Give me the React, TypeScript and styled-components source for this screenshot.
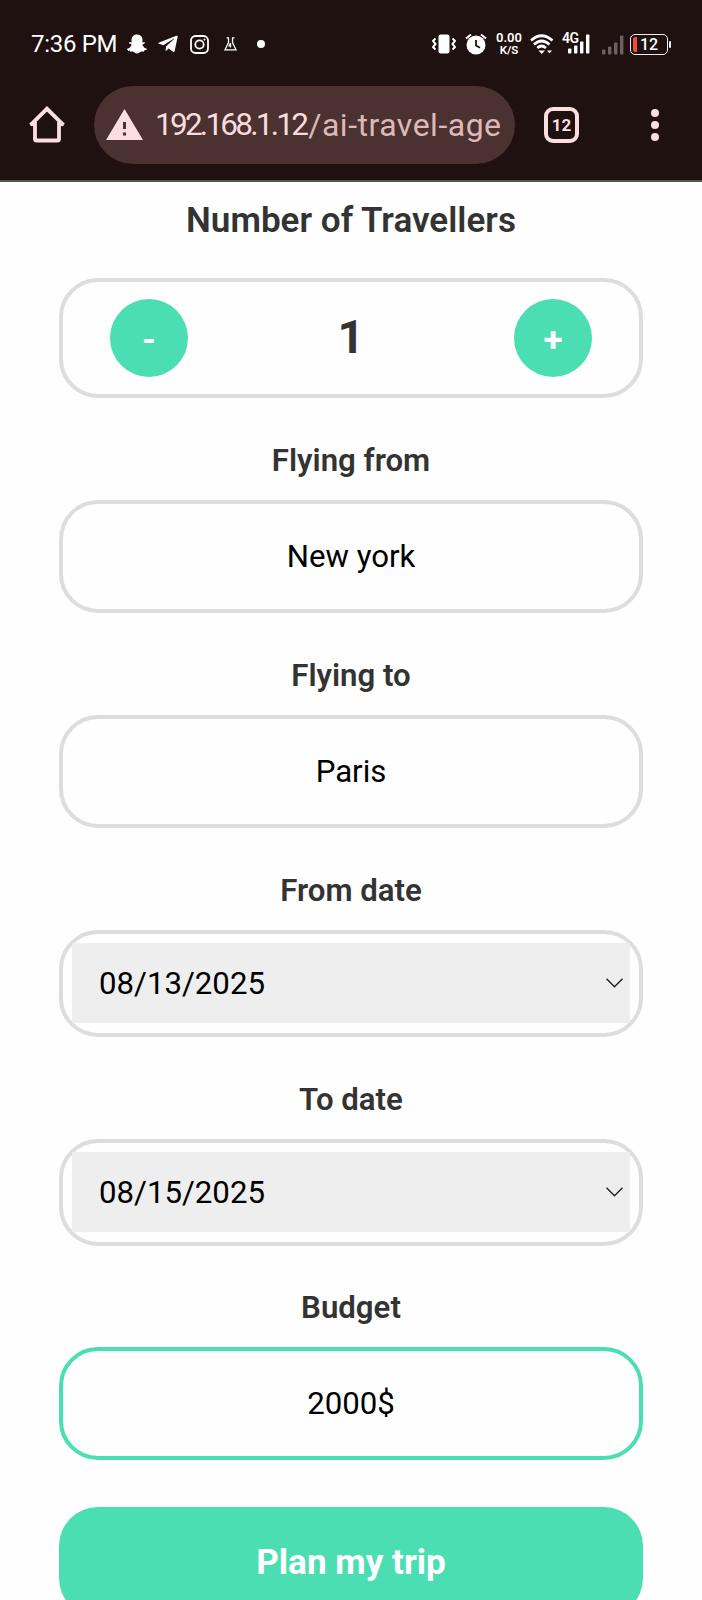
import React from "react";
import styled, { createGlobalStyle } from "styled-components";
import { FaSnapchatGhost, FaTelegramPlane } from "react-icons/fa";

const GREEN = "#4cdeb3";

const GlobalStyle = createGlobalStyle`
  * { box-sizing: border-box; }
  body { margin: 0; background: #fff; font-family: Roboto, "Liberation Sans", sans-serif; }
`;

const Screen = styled.div`
  width: 702px;
  height: 1600px;
  overflow: hidden;
  background: #fefefe;
`;

const BrowserChrome = styled.header`
  height: 182px;
  background: #1e1110;
  border-bottom: 2px solid #5b5050;
`;

const StatusBar = styled.div`
  display: flex;
  align-items: center;
  height: 86px;
  padding: 2px 34px 0 31px;
  color: #fff;
  svg { display: block; flex: none; }
`;

const Clock = styled.span`
  width: 96px;
  font-size: 24px;
  line-height: 28px;
  letter-spacing: -0.3px;
  white-space: nowrap;
`;

const IconSlot = styled.span<{ $w: number; $left?: number }>`
  display: flex;
  flex: none;
  justify-content: center;
  width: ${(p) => p.$w}px;
  margin-left: ${(p) => p.$left ?? 0}px;
`;

const Spacer = styled.div`
  flex: 1;
`;

const NetSpeed = styled.div`
  display: flex;
  flex-direction: column;
  align-items: center;
  width: 26px;
  margin-left: 9px;
  font-size: 13px;
  line-height: 12.5px;
  font-weight: 600;
  white-space: nowrap;
  small { font-size: 11.5px; }
`;

const AddressRow = styled.div`
  display: flex;
  align-items: center;
  height: 78px;
  padding: 0 40px 0 29px;
  svg { display: block; flex: none; }
`;

const AddressPill = styled.div`
  display: flex;
  align-items: center;
  width: 421px;
  height: 78px;
  margin-left: 29px;
  padding-left: 12px;
  border-radius: 39px;
  background: #4b3130;
`;

const Host = styled.span`
  margin-left: 12px;
  font-size: 31.5px;
  font-weight: 400;
  line-height: 40px;
  letter-spacing: -2.75px;
  white-space: nowrap;
  color: #fadcdc;
`;

const Path = styled.span`
  margin-left: 2px;
  font-size: 32px;
  font-weight: 400;
  line-height: 40px;
  letter-spacing: 0.5px;
  white-space: nowrap;
  color: #dcb9b9;
`;

const TabCount = styled.div`
  display: flex;
  align-items: center;
  justify-content: center;
  width: 35px;
  height: 36px;
  margin-left: 29px;
  border: 4px solid #fbdede;
  border-radius: 9px;
  color: #fbdede;
  font-size: 17px;
  font-weight: 700;
`;

const Dots = styled.div`
  display: flex;
  flex-direction: column;
  gap: 4px;
  margin-left: auto;
  margin-right: 3px;
  span { width: 8px; height: 8px; border-radius: 50%; background: #fbdede; }
`;

const Form = styled.main`
  display: flex;
  flex-direction: column;
  padding: 0 59px;
`;

const Title = styled.h2`
  margin: 17px 0 37px;
  font-size: 35.1px;
  font-weight: 600;
  line-height: 42px;
  text-align: center;
  color: #333;
`;

const Counter = styled.div`
  display: flex;
  align-items: flex-start;
  justify-content: space-between;
  height: 120px;
  padding: 17px 47px 0;
  border: 4px solid #ddd;
  border-radius: 39px;
`;

const RoundButton = styled.button`
  display: flex;
  align-items: center;
  justify-content: center;
  width: 78px;
  height: 78px;
  padding: 4px 0 0;
  border: 0;
  border-radius: 50%;
  background: ${GREEN};
  color: #fff;
  font: 700 35.1px/40px Roboto, sans-serif;
`;

const Count = styled.span`
  font-size: 46.8px;
  font-weight: 700;
  line-height: 77px;
  color: #333;
`;

const Field = styled.section<{ $top: number }>`
  display: flex;
  flex-direction: column;
  padding-top: ${(p) => p.$top}px;
`;

const Label = styled.label`
  height: 59px;
  font-size: 31.2px;
  font-weight: 600;
  line-height: 40px;
  text-align: center;
  color: #333;
`;

const TextInput = styled.input<{ $active?: boolean }>`
  width: 100%;
  height: 113px;
  padding: 0;
  border: 4px solid ${(p) => (p.$active ? GREEN : "#ddd")};
  border-radius: 39px;
  outline: none;
  background: transparent;
  color: #000;
  font: 400 31.2px Roboto, sans-serif;
  text-align: center;
`;

const DateBox = styled.div`
  display: flex;
  height: 107px;
  padding: 9px 9px 10px;
  border: 4px solid #ddd;
  border-radius: 39px;
`;

const DateValue = styled.div`
  display: flex;
  flex: 1;
  align-items: center;
  justify-content: space-between;
  padding: 0 7px 0 27px;
  background: #eee;
  color: #000;
  font-size: 31.2px;
`;

const Submit = styled.button`
  height: 110px;
  margin-top: 47px;
  padding: 1px 0 0;
  border: 0;
  border-radius: 39px;
  background: ${GREEN};
  color: #fff;
  font: 700 35.1px/41px Roboto, sans-serif;
`;

const Instagram = () => (
  <svg width="19" height="19" viewBox="0 0 19 19" fill="none" stroke="#fff" strokeWidth="1.8">
    <rect x="1" y="1" width="17" height="17" rx="4.5" />
    <circle cx="9.5" cy="9.5" r="4.2" />
    <circle cx="14.5" cy="4.6" r="0.6" fill="#fff" strokeWidth="1" />
  </svg>
);

const Flask = () => (
  <svg width="13" height="14" viewBox="0 0 13 14" fill="none" stroke="#fff" strokeWidth="1.3">
    <path d="M2.5 .8h2.5M8 .8h2.5M4.5 1v4.500L1 12.800h11L8.500 5.500V1M6.500 6L4.800 9.500M6.500 6.500v4" />
  </svg>
);

const Vibrate = () => (
  <svg width="24" height="20" viewBox="0 0 24 20" fill="none" stroke="#fff" strokeWidth="2">
    <rect x="6.5" y="0.5" width="11" height="19" rx="2" fill="#fff" stroke="none" />
    <path d="M3.500 4.500L1 7L3.500 10L1 13L3.500 15.500M20.500 4.500L23 7L20.500 10L23 13L20.500 15.500" />
  </svg>
);

const Alarm = () => (
  <svg width="22" height="22" viewBox="0 0 22 22" fill="none">
    <circle cx="11" cy="12" r="9.5" fill="#fff" />
    <path d="M1 5.500L6 1.500M21 5.500L16 1.500" stroke="#fff" strokeWidth="2" />
    <path d="M11 7v5.500l4 2.300" stroke="#1e1110" strokeWidth="1.8" />
  </svg>
);

const Wifi = () => (
  <svg width="24" height="20" viewBox="0 0 24 20" fill="none" stroke="#fff" strokeWidth="2.7">
    <path d="M1 6.500Q11.500-3 22.500 6.500M4 10.500Q11.500 3.500 19.500 10.500M7.300 14Q11.500 10 16 14" />
    <path d="M8.500 16.500h6.500l-3.200 3.500zM17 16.500h5l-2.500 3z" fill="#fff" stroke="none" />
  </svg>
);

const NetworkLabel = styled.div`
  display: flex;
  align-items: flex-start;
  width: 28px;
  height: 22px;
  margin-left: 8px;
  span { width: 6px; font-size: 14px; line-height: 10px; font-weight: 600; letter-spacing: -0.5px; }
`;

const Bars = ({ color, heights }: { color: string; heights: number[] }) => (
  <svg width="22" height="21" viewBox="0 0 22 21" fill={color}>
    {heights.map((h, i) => (
      <rect key={i} x={i * 6} y={20.5 - h} width="3.4" height={h} rx="0.8" />
    ))}
  </svg>
);

const Battery = styled.div`
  position: relative;
  display: flex;
  align-items: center;
  justify-content: center;
  width: 38px;
  height: 21px;
  margin-left: 6px;
  border: 1.5px solid #eee;
  border-radius: 5px;
  font-size: 16px;
  font-weight: 500;
  &::before { content: ""; position: absolute; left: 2px; top: 2px; width: 4px; height: 15px; border-radius: 2px 0 0 2px; background: #ef4b3e; }
  &::after { content: ""; position: absolute; right: -4px; top: 6px; width: 2px; height: 7px; border-radius: 1px; background: #eee; }
`;

const Home = () => (
  <svg width="36" height="39" viewBox="0 0 36 39" fill="none" stroke="#fbdede" strokeWidth="3.8">
    <path d="M1.500 19.200L18 2.800L34.500 19.200M1.500 18h4.500v15q0 1.500 1.500 1.500h21q1.500 0 1.500-1.500V18h4.500" />
  </svg>
);

const Warning = () => (
  <svg width="37" height="33" viewBox="0 0 37 33">
    <path d="M18.500 0L37 31H0z" fill="#fbdede" />
    <path d="M17 13h3v7h-3zM17 23.500h3v3h-3z" fill="#4b3130" />
  </svg>
);

const Chevron = () => (
  <svg width="17" height="10" viewBox="0 0 17 10" fill="none" stroke="#222" strokeWidth="1.4">
    <path d="M.5 .8L8.500 8.800L16.500 .8" />
  </svg>
);

const DateField = ({ label, value, top }: { label: string; value: string; top: number }) => (
  <Field $top={top}>
    <Label>{label}</Label>
    <DateBox>
      <DateValue>
        {value}
        <Chevron />
      </DateValue>
    </DateBox>
  </Field>
);

const TextField = ({ label, value, top, active }: { label: string; value: string; top: number; active?: boolean }) => (
  <Field $top={top}>
    <Label>{label}</Label>
    <TextInput readOnly value={value} $active={active} />
  </Field>
);

export default function App() {
  return (
    <Screen>
      <GlobalStyle />
      <BrowserChrome>
        <StatusBar>
          <Clock>7:36 PM</Clock>
          <IconSlot $w={20}><FaSnapchatGhost size={20} /></IconSlot>
          <IconSlot $w={22} $left={10}><FaTelegramPlane size={22} /></IconSlot>
          <IconSlot $w={19} $left={11}><Instagram /></IconSlot>
          <IconSlot $w={13} $left={15}><Flask /></IconSlot>
          <IconSlot $w={8} $left={20}>
            <svg width="8" height="8"><circle cx="4" cy="4" r="4" fill="#fff" /></svg>
          </IconSlot>
          <Spacer />
          <Vibrate />
          <IconSlot $w={22} $left={9}><Alarm /></IconSlot>
          <NetSpeed>0.00<small>K/S</small></NetSpeed>
          <IconSlot $w={24} $left={8}><Wifi /></IconSlot>
          <NetworkLabel>
            <span>4G</span>
            <Bars color="#fff" heights={[5, 8, 12, 19]} />
          </NetworkLabel>
          <IconSlot $w={22} $left={12}><Bars color="#6b6160" heights={[5, 8, 12, 19]} /></IconSlot>
          <Battery>12</Battery>
        </StatusBar>
        <AddressRow>
          <Home />
          <AddressPill>
            <Warning />
            <Host>192.168.1.12</Host>
            <Path>/ai-travel-age</Path>
          </AddressPill>
          <TabCount>12</TabCount>
          <Dots><span /><span /><span /></Dots>
        </AddressRow>
      </BrowserChrome>
      <Form>
        <Title>Number of Travellers</Title>
        <Counter>
          <RoundButton>-</RoundButton>
          <Count>1</Count>
          <RoundButton>+</RoundButton>
        </Counter>
        <TextField label="Flying from" value="New york" top={43} />
        <TextField label="Flying to" value="Paris" top={43} />
        <DateField label="From date" value="08/13/2025" top={43} />
        <DateField label="To date" value="08/15/2025" top={43} />
        <TextField label="Budget" value="2000$" top={42} active />
        <Submit>Plan my trip</Submit>
      </Form>
    </Screen>
  );
}
